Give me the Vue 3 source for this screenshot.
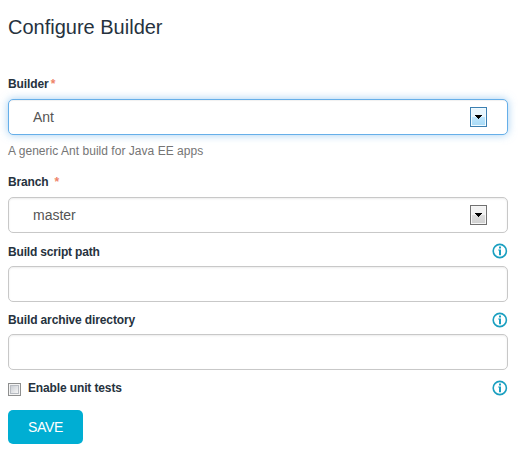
<script setup>
import { ref, reactive } from 'vue'

const selects = reactive([
  { id: 'builder', label: 'Builder', value: 'Ant', help: 'A generic Ant build for Java EE apps', focused: true },
  { id: 'branch', label: 'Branch', value: 'master', help: '', focused: false },
])
const inputs = reactive([
  { id: 'script', label: 'Build script path', value: '' },
  { id: 'archive', label: 'Build archive directory', value: '' },
])
const unitTests = ref(false)
</script>

<template>
  <form class="form" @submit.prevent>
    <h1 class="title">Configure Builder</h1>

    <div v-for="s in selects" :key="s.id" class="group" :class="s.id">
      <div class="label-row">
        <span class="label">{{ s.label }}</span>
        <span class="required">*</span>
      </div>
      <div class="field select" :class="{ focused: s.focused }" tabindex="0">
        <span class="value">{{ s.value }}</span>
        <span class="arrow">
          <svg width="7" height="4" viewBox="0 0 7 4" shape-rendering="crispEdges">
            <path d="M0 0h7v1H6v1H5v1H4v1H3V3H2V2H1V1H0z" fill="#000" />
          </svg>
        </span>
      </div>
      <p v-if="s.help" class="help">{{ s.help }}</p>
    </div>

    <div v-for="i in inputs" :key="i.id" class="group" :class="i.id">
      <div class="label-row">
        <label class="label" :for="i.id">{{ i.label }}</label>
        <svg class="info" width="16" height="16" viewBox="0 0 16 16">
          <circle cx="7.8" cy="8" r="6.6" fill="none" stroke="#1a9fc0" stroke-width="1.6" />
          <path d="M7 3.5h2v2H7zM6.2 6.6H9v5.6H7V7.6h-.8z" fill="#1a9fc0" />
        </svg>
      </div>
      <input :id="i.id" v-model="i.value" class="field" type="text" />
    </div>

    <div class="check-row">
      <input id="tests" v-model="unitTests" class="checkbox" type="checkbox" />
      <label class="label" for="tests">Enable unit tests</label>
      <svg class="info" width="16" height="16" viewBox="0 0 16 16">
        <circle cx="7.8" cy="8" r="6.6" fill="none" stroke="#1a9fc0" stroke-width="1.6" />
        <path d="M7 3.5h2v2H7zM6.2 6.6H9v5.6H7V7.6h-.8z" fill="#1a9fc0" />
      </svg>
    </div>

    <button class="save" type="submit">SAVE</button>
  </form>
</template>

<style>
body {
  background: #fff;
  overflow: hidden;
}
</style>

<style scoped>
.form {
  box-sizing: border-box;
  width: 516px;
  height: 454px;
  padding: 15px 8px 0;
  font-family: "Liberation Sans", Arial, sans-serif;
  font-size: 12px;
  line-height: 16px;
  color: #26323e;
}
.title {
  margin: 0 0 37px;
  font-size: 20px;
  line-height: 24px;
  font-weight: 400;
}
.label-row {
  display: flex;
  align-items: center;
  height: 16px;
  margin-bottom: 7px;
}
.label {
  font-weight: 700;
  letter-spacing: -0.13px;
}
.builder .label {
  letter-spacing: -0.1px;
}
.script .label {
  letter-spacing: -0.18px;
}
.required {
  margin-left: 2px;
  color: #ee8468;
  font-weight: 700;
}
.branch .required {
  margin-left: 6px;
}
.field {
  display: block;
  box-sizing: border-box;
  width: 500px;
  height: 36px;
  padding: 0 20px 0 24px;
  border: 1px solid #c8c8c8;
  border-radius: 5px;
  outline: none;
  background: #fff;
  box-shadow: inset 0 1px 2px rgba(0, 0, 0, 0.08);
  font: 14px/34px "Liberation Sans", Arial, sans-serif;
  color: #555;
}
.select {
  display: flex;
  align-items: center;
  justify-content: space-between;
}
.focused {
  border-color: #66afe9;
  box-shadow: inset 0 1px 1px rgba(0, 0, 0, 0.06), 0 0 8px rgba(102, 175, 233, 0.6);
}
.arrow {
  box-sizing: border-box;
  display: flex;
  align-items: center;
  justify-content: center;
  width: 17px;
  height: 20px;
  border: 1px solid #707070;
  background: linear-gradient(#f2f2f2 0 50%, #dddddd 50%, #cfcfcf);
  box-shadow: inset 0 0 0 1px #f6f6f6;
}
.focused .arrow {
  border-color: #3c7fb1;
  background: linear-gradient(#e9f6fd 0 50%, #bee6fd 50%, #a7d9f5);
  box-shadow: inset 0 0 0 1px #effaff;
}
.help {
  margin: 8px 0 0;
  color: #757575;
  letter-spacing: 0.03px;
}
.branch {
  margin-top: 15px;
}
.script {
  margin-top: 10px;
}
.script .label-row {
  align-items: flex-end;
}
.script .label {
  line-height: 14px;
}
.archive {
  margin-top: 10px;
}
.archive .label-row {
  margin-bottom: 6px;
}
.info {
  display: block;
  margin-left: auto;
}
.check-row {
  display: flex;
  align-items: center;
  height: 16px;
  margin-top: 10px;
}
.checkbox {
  appearance: none;
  box-sizing: border-box;
  width: 13px;
  height: 13px;
  margin: 3px 7px 0 0;
  border: 1px solid #8e8f8f;
  background: linear-gradient(135deg, #cbcfd5, #f6f6f6) content-box, #f4f4f4;
  padding: 2px;
  box-shadow: inset 0 0 0 1px #f4f4f4, inset 0 0 0 2px #b8bcc2;
}
.save {
  display: block;
  width: 75px;
  height: 34px;
  margin-top: 14px;
  padding: 0;
  border: 0;
  border-radius: 5px;
  background: #00aed3;
  color: #fff;
  font: 14px/34px "Liberation Sans", Arial, sans-serif;
  letter-spacing: -0.3px;
}
</style>
